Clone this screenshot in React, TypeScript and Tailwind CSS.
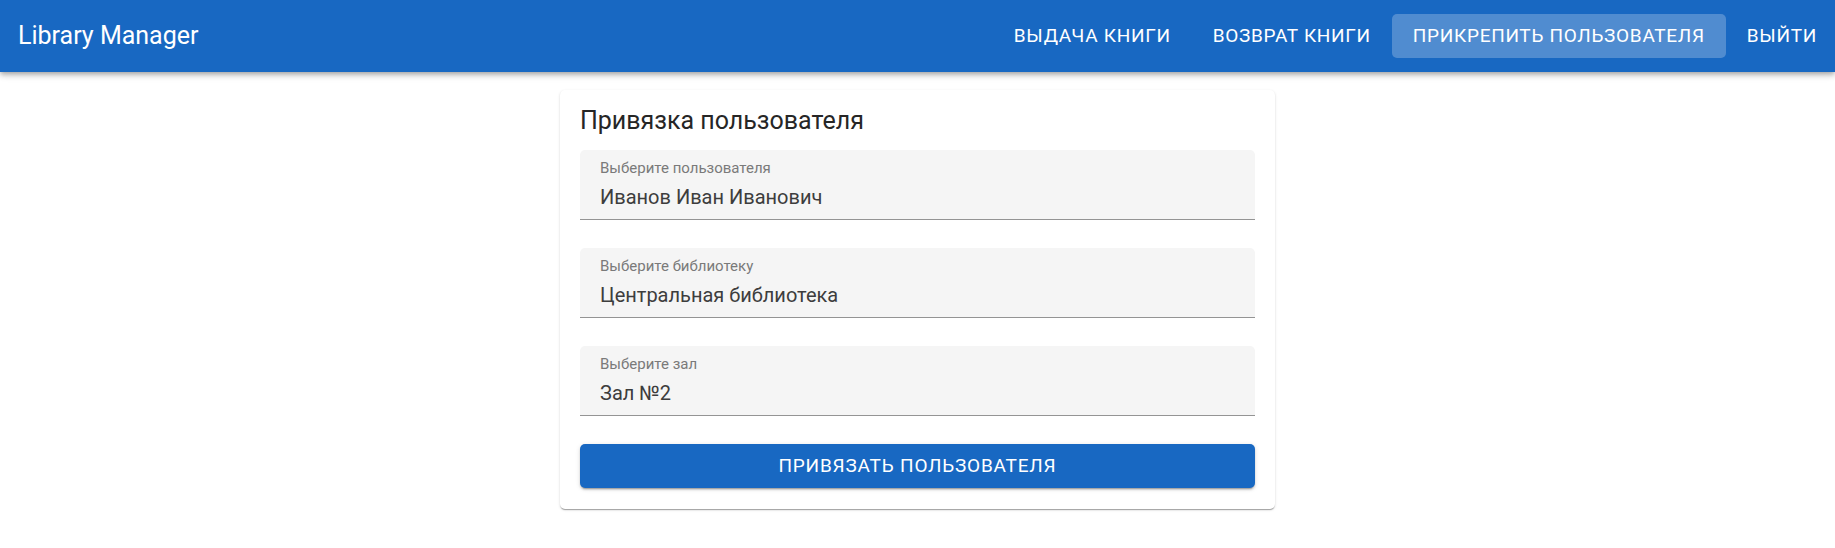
import { useState } from "react";

const navItems = ["Выдача книги", "Возврат книги", "Прикрепить пользователя", "Выйти"];

const fields = [
  { label: "Выберите пользователя", value: "Иванов Иван Иванович" },
  { label: "Выберите библиотеку", value: "Центральная библиотека" },
  { label: "Выберите зал", value: "Зал №2" },
];

const App = () => {
  const [active] = useState<string>("Прикрепить пользователя");

  return (
    <div className="min-h-screen bg-white font-['Roboto',sans-serif]">
      {/* top bar */}
      <header className="relative z-10 h-[72px] flex items-center bg-[#1868c2] pl-[18px] pr-0 shadow-[0_2px_4px_-1px_rgba(0,0,0,0.2),0_4px_5px_0_rgba(0,0,0,0.14),0_1px_10px_0_rgba(0,0,0,0.12)]">
        <h1 className="text-[25px] leading-8 text-white font-normal">Library Manager</h1>
        <nav className="ml-auto mr-[-3px] flex items-center">
          {navItems.map((item) => (
            <button
              key={item}
              type="button"
              className={
                "h-[44px] px-[21px] rounded-[5px] uppercase text-white text-[19px] font-normal tracking-[0.7px] " +
                (item === active ? "bg-[#508cd0]" : "bg-transparent")
              }
            >
              {item}
            </button>
          ))}
        </nav>
      </header>

      <main className="flex justify-center pt-[18px]">
        <section className="w-[715px] bg-white rounded-[5px] px-5 pt-[15px] pb-[21px] shadow-[0_2px_1px_-1px_rgba(0,0,0,0.2),0_1px_1px_0_rgba(0,0,0,0.14),0_1px_3px_0_rgba(0,0,0,0.12)]">
          <h2 className="text-[25px] leading-8 text-[#262626] mb-[13px]">Привязка пользователя</h2>

          <div className="flex flex-col gap-[28px]">
            {fields.map((f) => (
              <div key={f.label} className="bg-[#f5f5f5] rounded-t-[5px] border-b border-[#949494] pl-5 pt-[10px] pb-[10px]">
                <div className="text-[15px] leading-4 text-[#7a7a7a]">{f.label}</div>
                <div className="mt-[9px] text-[20px] leading-6 text-[#3d3d3d]">{f.value}</div>
              </div>
            ))}

            <button
              type="button"
              className="h-[44px] w-full rounded-[5px] bg-[#1868c2] text-white uppercase text-[19px] font-normal tracking-[0.8px] shadow-[0_3px_1px_-2px_rgba(0,0,0,0.2),0_2px_2px_0_rgba(0,0,0,0.14),0_1px_5px_0_rgba(0,0,0,0.12)]"
            >
              Привязать пользователя
            </button>
          </div>
        </section>
      </main>
    </div>
  );
};

export default App;
